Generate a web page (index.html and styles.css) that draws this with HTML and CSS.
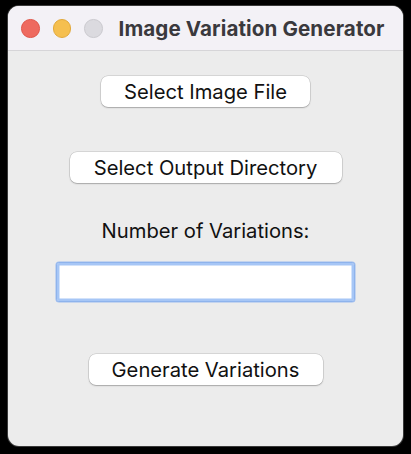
FILE: index.html
```html
<!DOCTYPE html>
<html>
<head>
<meta charset="utf-8">
<link rel="stylesheet" href="styles.css">
</head>
<body>
<div class="window">
  <div class="titlebar">
    <div class="lights">
      <span class="light light-close"></span>
      <span class="light light-min"></span>
      <span class="light light-max"></span>
    </div>
    <div class="title">Image Variation Generator</div>
  </div>
  <div class="content">
    <button class="btn btn-image">Select Image File</button>
    <button class="btn btn-output">Select Output Directory</button>
    <div class="label">Number of Variations:</div>
    <input class="field" type="text">
    <button class="btn btn-generate">Generate Variations</button>
  </div>
</div>
</body>
</html>
```

FILE: styles.css
```css
html, body {
  margin: 0;
  padding: 0;
  background: #000;
  width: 411px;
  height: 454px;
  overflow: hidden;
}

body {
  padding: 6px 0 0 8px;
  box-sizing: border-box;
  font-family: Inter, "Liberation Sans", sans-serif;
}

.window {
  width: 395px;
  height: 440px;
  border-radius: 11px;
  overflow: hidden;
  background: #ececec;
  box-shadow: 0 0 0 1px #3a3a3a;
  display: flex;
  flex-direction: column;
}

.titlebar {
  height: 44px;
  background: #f3f1f6;
  border-bottom: 1px solid #d6d5d8;
  display: flex;
  align-items: center;
  padding: 0 0 0 13px;
  gap: 16px;
}

.lights {
  display: flex;
  gap: 13px;
  margin-top: 1px;
}

.light {
  width: 18.5px;
  height: 18.5px;
  border-radius: 50%;
  box-sizing: border-box;
  display: block;
}

.light-close { background: #ee6a5f; border: 1px solid #e0574b; }
.light-min { background: #f5bf4f; border: 1px solid #e2a93b; }
.light-max { background: #dbdadf; border: 1px solid #cbcacf; }

.title {
  font-weight: 700;
  font-size: 20.6px;
  color: #3a393d;
  letter-spacing: 0.1px;
}

.content {
  flex: 1;
  display: flex;
  flex-direction: column;
  align-items: center;
  padding-top: 25px;
}

.btn {
  height: 31px;
  background: #fff;
  border: none;
  border-radius: 7px;
  box-shadow: 0 0 0 0.5px rgba(0,0,0,0.18), 0 1px 1.5px rgba(0,0,0,0.22);
  font-family: Inter, "Liberation Sans", sans-serif;
  font-size: 20.2px;
  color: #111;
  padding: 0;
  line-height: 31px;
}

.btn-image { width: 209px; }
.btn-output { width: 272px; margin-top: 45px; }
.btn-generate { width: 234px; margin-top: 52px; }

.label {
  margin-top: 35px;
  font-size: 20.2px;
  line-height: 25px;
  color: #111;
}

.field {
  margin-top: 19px;
  width: 299px;
  height: 40px;
  box-sizing: border-box;
  background: #fff;
  border: 1px solid #8eb3ec;
  border-radius: 3px;
  box-shadow: 0 0 0 2.5px #a6c6f6 inset, 0 0 0 0.5px #9cbcf0;
  outline: none;
  padding: 0 8px;
  font-size: 18px;
}
```
